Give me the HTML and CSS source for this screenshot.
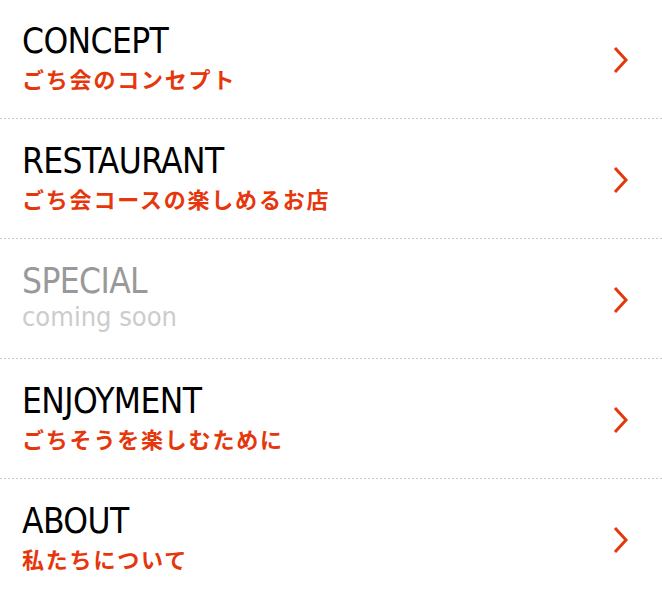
FILE: index.html
```html
<!DOCTYPE html>
<html lang="ja">
<head>
<meta charset="utf-8">
<link rel="stylesheet" href="styles.css">
</head>
<body>
<nav class="menu">
  <a class="item" href="#">
    <div class="text">
      <div class="title">CONCEPT</div>
      <div class="sub">ごち会のコンセプト</div>
    </div>
    <svg class="chev" viewBox="0 0 16 28" width="16" height="28"><path d="M2 2 L13 14 L2 26" fill="none" stroke="currentColor" stroke-width="3"/></svg>
  </a>
  <a class="item" href="#">
    <div class="text">
      <div class="title">RESTAURANT</div>
      <div class="sub">ごち会コースの楽しめるお店</div>
    </div>
    <svg class="chev" viewBox="0 0 16 28" width="16" height="28"><path d="M2 2 L13 14 L2 26" fill="none" stroke="currentColor" stroke-width="3"/></svg>
  </a>
  <a class="item disabled" href="#">
    <div class="text">
      <div class="title">SPECIAL</div>
      <div class="sub latin">coming soon</div>
    </div>
    <svg class="chev" viewBox="0 0 16 28" width="16" height="28"><path d="M2 2 L13 14 L2 26" fill="none" stroke="currentColor" stroke-width="3"/></svg>
  </a>
  <a class="item" href="#">
    <div class="text">
      <div class="title">ENJOYMENT</div>
      <div class="sub">ごちそうを楽しむために</div>
    </div>
    <svg class="chev" viewBox="0 0 16 28" width="16" height="28"><path d="M2 2 L13 14 L2 26" fill="none" stroke="currentColor" stroke-width="3"/></svg>
  </a>
  <a class="item last" href="#">
    <div class="text">
      <div class="title">ABOUT</div>
      <div class="sub">私たちについて</div>
    </div>
    <svg class="chev" viewBox="0 0 16 28" width="16" height="28"><path d="M2 2 L13 14 L2 26" fill="none" stroke="currentColor" stroke-width="3"/></svg>
  </a>
</nav>
</body>
</html>
```
FILE: styles.css
```css
html, body {
  margin: 0;
  padding: 0;
  background: #fff;
}
.menu {
  display: flex;
  flex-direction: column;
}
.item {
  display: flex;
  align-items: center;
  justify-content: space-between;
  height: 119px;
  box-sizing: border-box;
  padding: 0 33px 0 22px;
  text-decoration: none;
  background-image: linear-gradient(to right, #c8c8c8 50%, transparent 50%);
  background-size: 4px 1px;
  background-repeat: repeat-x;
  background-position: 0 bottom;
  margin-bottom: 1px;
}
.item.last {
  background-image: none;
}
.text {
  display: flex;
  flex-direction: column;
  align-self: flex-start;
  padding-top: 22px;
}
.title {
  font-family: "DejaVu Sans Condensed", "Liberation Sans Narrow", sans-serif;
  font-size: 35px;
  line-height: 39px;
  letter-spacing: -0.6px;
  color: #000;
}
.sub {
  font-family: "Noto Sans CJK JP", sans-serif;
  font-weight: 700;
  font-size: 22px;
  line-height: 30px;
  margin-top: 2px;
  letter-spacing: 1.8px;
  color: #e6370c;
}
.sub.latin {
  font-family: "DejaVu Sans Condensed", "Liberation Sans Narrow", sans-serif;
  font-weight: 400;
  font-size: 27px;
  margin-top: 1px;
  letter-spacing: 0;
  color: #cccccc;
}
.disabled .title {
  color: #999;
}
.chev {
  color: #e6370c;
  display: block;
}
```
